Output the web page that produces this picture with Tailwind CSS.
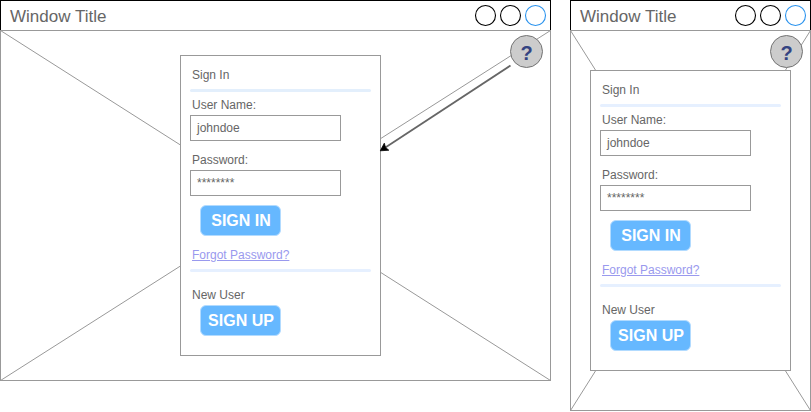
<!DOCTYPE html>
<html lang="en">
<head>
<meta charset="utf-8">
<title>Sign In</title>
<script src="https://cdn.jsdelivr.net/npm/@tailwindcss/browser@4"></script>
</head>
<body class="bg-white font-['Liberation_Sans',Arial,sans-serif] overflow-hidden">
<main class="relative flex items-start gap-[19px] w-[811px] h-[412px]">

  <section class="w-[551px] shrink-0">
    <header class="flex h-[30px] items-start justify-between border border-b-0 border-black pl-[9px] pr-[3px]">
      <h1 class="text-[17px] leading-[32px] text-[#666666]">Window Title</h1>
      <svg class="w-[74px] h-6 mt-[3px]" viewBox="0 0 74 24" fill="none" stroke-width="1.1"><circle cx="12.5" cy="11.5" r="10" stroke="#000"/><circle cx="37.5" cy="11.5" r="10" stroke="#000"/><circle cx="62.5" cy="11.5" r="10" stroke="#2a93ee"/></svg>
    </header>
    <div class="relative h-[351px] border border-[#999] pt-6 pl-[179px]">
      <svg class="absolute -left-px -top-px w-[551px] h-[351px]" fill="none" stroke="#999"><path d="M.5 .5L550.5 350.5M550.5 .5L.5 350.5"/></svg>
      <div class="relative w-[201px] h-[301px] border border-[#999] bg-white pl-[9px] pr-[9px] text-xs leading-4 text-[#666]">
        <h2 class="pt-[11px] pl-0.5 pb-1.5">Sign In</h2>
        <div class="h-[3px] w-[181px] rounded-full bg-[#e3effc]"></div>
        <p class="mt-[5px] pl-0.5">User Name:</p>
        <div class="mt-0.5 h-[26px] w-[151px] border border-[#999] pl-1.5 leading-6">johndoe</div>
        <p class="mt-[11px] pl-0.5">Password:</p>
        <div class="mt-0.5 h-[26px] w-[151px] border border-[#999] pl-1.5 leading-6">********</div>
        <div class="mt-[9px] ml-2.5 h-[31px] w-[81px] rounded-md border border-[#b2dbff] bg-[#66b8ff] pl-px text-center text-base font-bold leading-[29px] text-white">SIGN IN</div>
        <p class="mt-[11px] pl-0.5 text-[#9999ee] underline">Forgot Password?</p>
        <div class="mt-1.5 h-[3px] w-[181px] rounded-full bg-[#e6f0ff]"></div>
        <p class="mt-[15px] pl-0.5">New User</p>
        <div class="mt-0.5 ml-2.5 h-[31px] w-[81px] rounded-md border border-[#b2dbff] bg-[#66b8ff] pl-px text-center text-base font-bold leading-[29px] text-white">SIGN UP</div>
      </div>
    </div>
  </section>

  <section class="w-[241px] shrink-0">
    <header class="flex h-[30px] items-start justify-between border border-b-0 border-black pl-[9px] pr-[3px]">
      <h1 class="text-[17px] leading-[32px] text-[#666666]">Window Title</h1>
      <svg class="w-[74px] h-6 mt-[3px]" viewBox="0 0 74 24" fill="none" stroke-width="1.1"><circle cx="12.5" cy="11.5" r="10" stroke="#000"/><circle cx="37.5" cy="11.5" r="10" stroke="#000"/><circle cx="62.5" cy="11.5" r="10" stroke="#2a93ee"/></svg>
    </header>
    <div class="relative h-[381px] border border-[#999] pt-[39px] pl-[19px]">
      <svg class="absolute -left-px -top-px w-[241px] h-[381px]" fill="none" stroke="#999"><path d="M.5 .5L240.5 380.5M240.5 .5L.5 380.5"/></svg>
      <div class="relative w-[201px] h-[301px] border border-[#999] bg-white pl-[9px] pr-[9px] text-xs leading-4 text-[#666]">
        <h2 class="pt-[11px] pl-0.5 pb-1.5">Sign In</h2>
        <div class="h-[3px] w-[181px] rounded-full bg-[#e6f0ff]"></div>
        <p class="mt-[5px] pl-0.5">User Name:</p>
        <div class="mt-0.5 h-[26px] w-[151px] border border-[#999] pl-1.5 leading-6">johndoe</div>
        <p class="mt-[11px] pl-0.5">Password:</p>
        <div class="mt-0.5 h-[26px] w-[151px] border border-[#999] pl-1.5 leading-6">********</div>
        <div class="mt-[9px] ml-2.5 h-[31px] w-[81px] rounded-md border border-[#b2dbff] bg-[#66b8ff] pl-px text-center text-base font-bold leading-[29px] text-white">SIGN IN</div>
        <p class="mt-[11px] pl-0.5 text-[#9999ee] underline">Forgot Password?</p>
        <div class="mt-1.5 h-[3px] w-[181px] rounded-full bg-[#e6f0ff]"></div>
        <p class="mt-[15px] pl-0.5">New User</p>
        <div class="mt-0.5 ml-2.5 h-[31px] w-[81px] rounded-md border border-[#b2dbff] bg-[#66b8ff] pl-px text-center text-base font-bold leading-[29px] text-white">SIGN UP</div>
      </div>
    </div>
  </section>

  <!-- Annotation arrow and help badges -->
  <svg class="absolute left-0 top-0 w-[811px] h-[412px]" viewBox="0 0 811 412">
    <path d="M510.5 65.5L385 147.8" stroke="#666" stroke-width="1.8" fill="none"/>
    <path d="M380.3 150.8L384.3 143.2L385.5 147.4L388.8 150.2Z" fill="#000" stroke="#000" stroke-width=".8"/>
    <g fill="#ccc" stroke="#737373"><circle cx="526.5" cy="51.5" r="16"/><circle cx="786.5" cy="51.5" r="16"/></g>
    <g fill="#344482" font-family="'Liberation Sans',Arial,sans-serif" font-weight="700" font-size="20" text-anchor="middle"><text x="526.5" y="59.5">?</text><text x="786.5" y="59.5">?</text></g>
  </svg>
</main>
</body>
</html>
